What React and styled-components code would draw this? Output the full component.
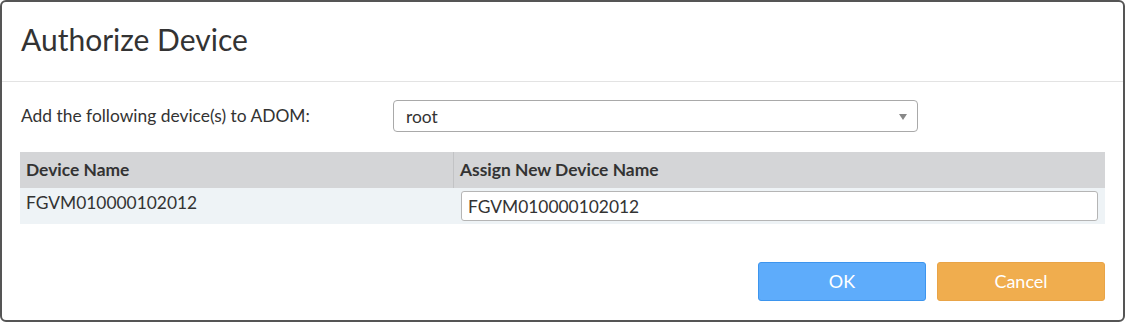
import React from "react";
import styled, { createGlobalStyle } from "styled-components";

const Global = createGlobalStyle`
  html, body { margin: 0; padding: 0; background: #ffffff; }
  body { font-family: Lato, "Noto Sans", sans-serif; color: #333; }
  * { box-sizing: border-box; }
`;

const Dialog = styled.div`
  width: 1125px;
  height: 322px;
  border: 2px solid #555;
  border-radius: 6px;
  background: #fff;
  display: flex;
  flex-direction: column;
  overflow: hidden;
`;

const Header = styled.div`
  height: 80px;
  border-bottom: 1px solid #e3e3e3;
  padding: 0 0 0 19px;
  display: flex;
  align-items: center;
`;

const Title = styled.h1`
  margin: 0;
  font-size: 30px;
  font-weight: 400;
  color: #333;
  line-height: 1;
  padding-bottom: 6px;
`;

const Body = styled.div`
  padding: 18px 18px 0 18px;
  display: flex;
  flex-direction: column;
`;

const FieldRow = styled.div`
  display: grid;
  grid-template-columns: 373px 525px;
  align-items: center;
  height: 32px;
`;

const Label = styled.label`
  font-size: 17.4px;
  padding-left: 1px;
  margin-top: -2px;
  color: #333;
`;

const Select = styled.div`
  height: 32px;
  border: 1px solid #a9a9a9;
  border-radius: 4px;
  display: flex;
  align-items: center;
  justify-content: space-between;
  padding: 0 10px 0 12px;
  font-size: 17.4px;
  color: #333;
`;

const Arrow = styled.span`
  width: 0;
  height: 0;
  border-left: 4px solid transparent;
  border-right: 4px solid transparent;
  border-top: 6px solid #888;
  margin-top: 2px;
`;

const Table = styled.div`
  margin-top: 20px;
  width: 1085px;
  display: flex;
  flex-direction: column;
`;

const Row = styled.div`
  display: grid;
  grid-template-columns: 433px 1fr;
  height: 36px;
  background: ${(p) => (p.$head ? "#d4d5d7" : "#eef3f6")};
`;

const Cell = styled.div`
  display: flex;
  align-items: ${(p) => (p.$top ? "flex-start" : "center")};
  padding: ${(p) => (p.$top ? "4px 6px 0" : p.$head ? "0 6px 2px" : "0 6px")};
  font-size: 17.4px;
  font-weight: ${(p) => (p.$head ? 700 : 400)};
  color: #333;
  border-left: ${(p) => (p.$divider ? "1px solid #c2c3c5" : "none")};
`;

const Input = styled.div`
  width: 637px;
  height: 30px;
  margin-left: 2px;
  border: 1px solid #b5b5b5;
  border-radius: 3px;
  background: #fff;
  display: flex;
  align-items: center;
  padding: 0 6px;
  font-size: 17.4px;
  color: #333;
`;

const Footer = styled.div`
  display: flex;
  justify-content: flex-end;
  gap: 11px;
  padding: 38px 18px 0 0;
`;

const Button = styled.button`
  width: 168px;
  height: 39px;
  border-radius: 3px;
  border: 1px solid ${(p) => (p.$primary ? "#3d95ee" : "#e9a447")};
  background: ${(p) => (p.$primary ? "#5eacfb" : "#f0ad4e")};
  color: #fff;
  font-family: Lato, "Noto Sans", sans-serif;
  font-size: 18px;
  padding: 0 0 2px;
`;

export default function App() {
  return (
    <>
      <Global />
      <Dialog>
        <Header>
          <Title>Authorize Device</Title>
        </Header>
        <Body>
          <FieldRow>
            <Label>Add the following device(s) to ADOM:</Label>
            <Select>
              <span>root</span>
              <Arrow />
            </Select>
          </FieldRow>
          <Table>
            <Row $head>
              <Cell $head>Device Name</Cell>
              <Cell $head $divider>Assign New Device Name</Cell>
            </Row>
            <Row>
              <Cell $top>FGVM010000102012</Cell>
              <Cell>
                <Input>FGVM010000102012</Input>
              </Cell>
            </Row>
          </Table>
        </Body>
        <Footer>
          <Button $primary>OK</Button>
          <Button>Cancel</Button>
        </Footer>
      </Dialog>
    </>
  );
}
